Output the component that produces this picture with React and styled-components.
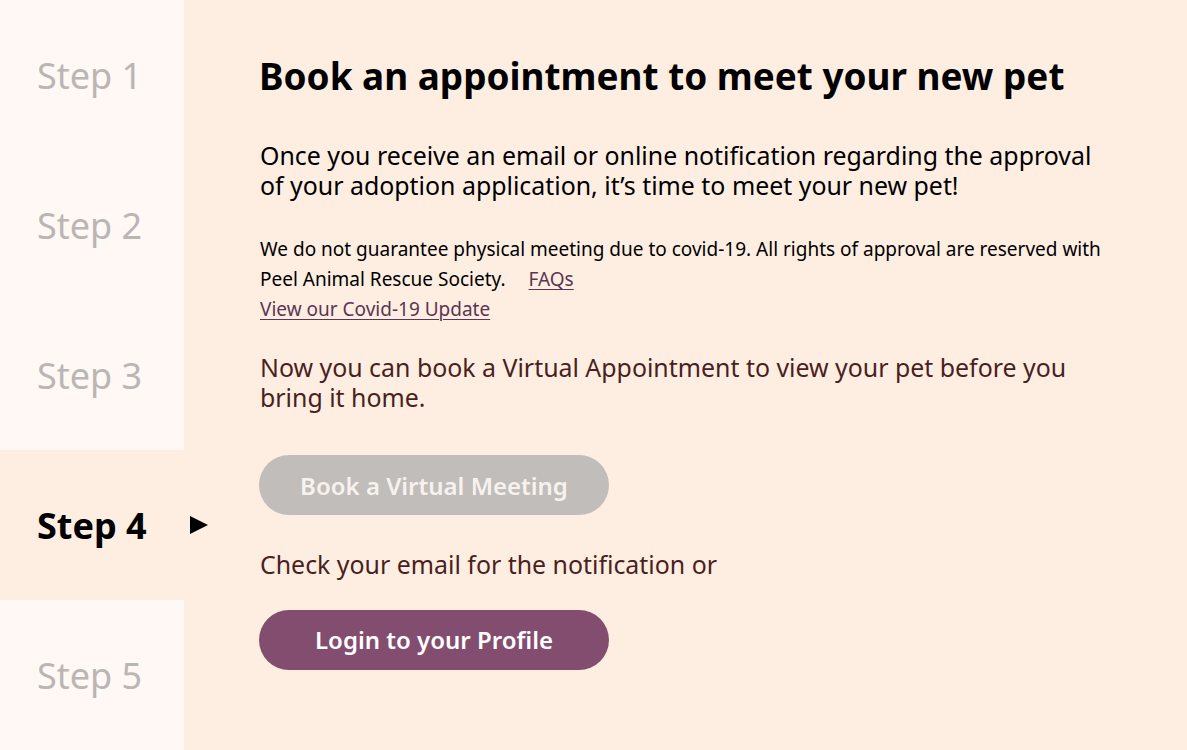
import React from 'react'
import styled, { createGlobalStyle } from 'styled-components'

const GlobalStyle = createGlobalStyle`
  html, body {
    margin:0;
    padding:0;
    background:#feeee1;
  }
  * { box-sizing:border-box; }
`

const Page = styled.div`
  display:flex;
  width:100%;
  height:750px;
  font-family:'Noto Sans', 'Open Sans', sans-serif;
  background:#feeee1;
`

const Steps = styled.div`
  width:184px;
  flex-shrink:0;
  display:flex;
  flex-direction:column;
`

const StepItem = styled.div`
  position:relative;
  flex:1;
  display:flex;
  align-items:center;
  padding-left:37px;
  font-size:36px;
  font-weight:${props => props.active ? 700 : 400};
  color:${props => props.active ? '#000' : '#b9b6b4'};
  background:${props => props.active ? '#feeee1' : '#fff8f4'};
`

const Arrow = styled.span`
  position:absolute;
  right:-24px;
  top:50%;
  transform:translateY(-50%);
  width:0;
  height:0;
  border-top:9.5px solid transparent;
  border-bottom:9.5px solid transparent;
  border-left:18px solid #000;
`

const Content = styled.div`
  flex:1;
  padding:49px 0 0 75px;
  display:flex;
  flex-direction:column;
  align-items:flex-start;
`

const Title = styled.h1`
  margin:0;
  font-size:36.9px;
  font-weight:700;
  line-height:54px;
  color:#000;
`

const Lead = styled.p`
  margin:${props => props.top || '0'} 0 0 1px;
  font-size:24.9px;
  line-height:29.5px;
  color:${props => props.muted ? '#4a1f22' : '#000'};
  max-width:${props => props.max || '850px'};
`

const Note = styled.p`
  margin:34px 0 0 1px;
  font-size:19px;
  line-height:30px;
  color:#000;
  max-width:860px;
`

const Link = styled.a`
  color:#5b3553;
  text-decoration:underline;
  text-decoration-thickness:1px;
  text-underline-offset:3px;
  padding-left:${props => props.gap || '0'};
  text-decoration-skip-ink:auto;
`

const Button = styled.button`
  display:block;
  width:350px;
  height:60px;
  padding:0;
  border:none;
  border-radius:30px;
  font-family:inherit;
  font-size:24px;
  font-weight:600;
  color:${props => props.primary ? '#fff' : '#f7f2ee'};
  background:${props => props.primary ? '#834d6f' : '#c1bdba'};
  margin-top:${props => props.top};
  cursor:pointer;
`

const Spacer = styled.span`
  display:inline-block;
  width:23px;
`

const steps = ['Step 1', 'Step 2', 'Step 3', 'Step 4', 'Step 5']

const App = () => {
  return (
    <Page>
      <GlobalStyle />
      <Steps>
        {steps.map((s, i) => (
          <StepItem key={s} active={i === 3}>
            {s}
            {i === 3 && <Arrow />}
          </StepItem>
        ))}
      </Steps>
      <Content>
        <Title>Book an appointment to meet your new pet</Title>
        <Lead top="38px" max="845px">
          Once you receive an email or online notification regarding the approval of your adoption application, it’s time to meet your new pet!
        </Lead>
        <Note>
          We do not guarantee physical meeting due to covid-19. All rights of approval are reserved with Peel Animal Rescue Society.
          <Spacer />
          <Link href="#">FAQs</Link>
          <br />
          <Link href="#">View our Covid-19 Update</Link>
        </Note>
        <Lead top="29px" muted max="845px">
          Now you can book a Virtual Appointment to view your pet before you bring it home.
        </Lead>
        <Button top="43px">Book a Virtual Meeting</Button>
        <Lead top="35px" muted>Check your email for the notification or</Lead>
        <Button primary top="30px">Login to your Profile</Button>
      </Content>
    </Page>
  )
}

export default App
